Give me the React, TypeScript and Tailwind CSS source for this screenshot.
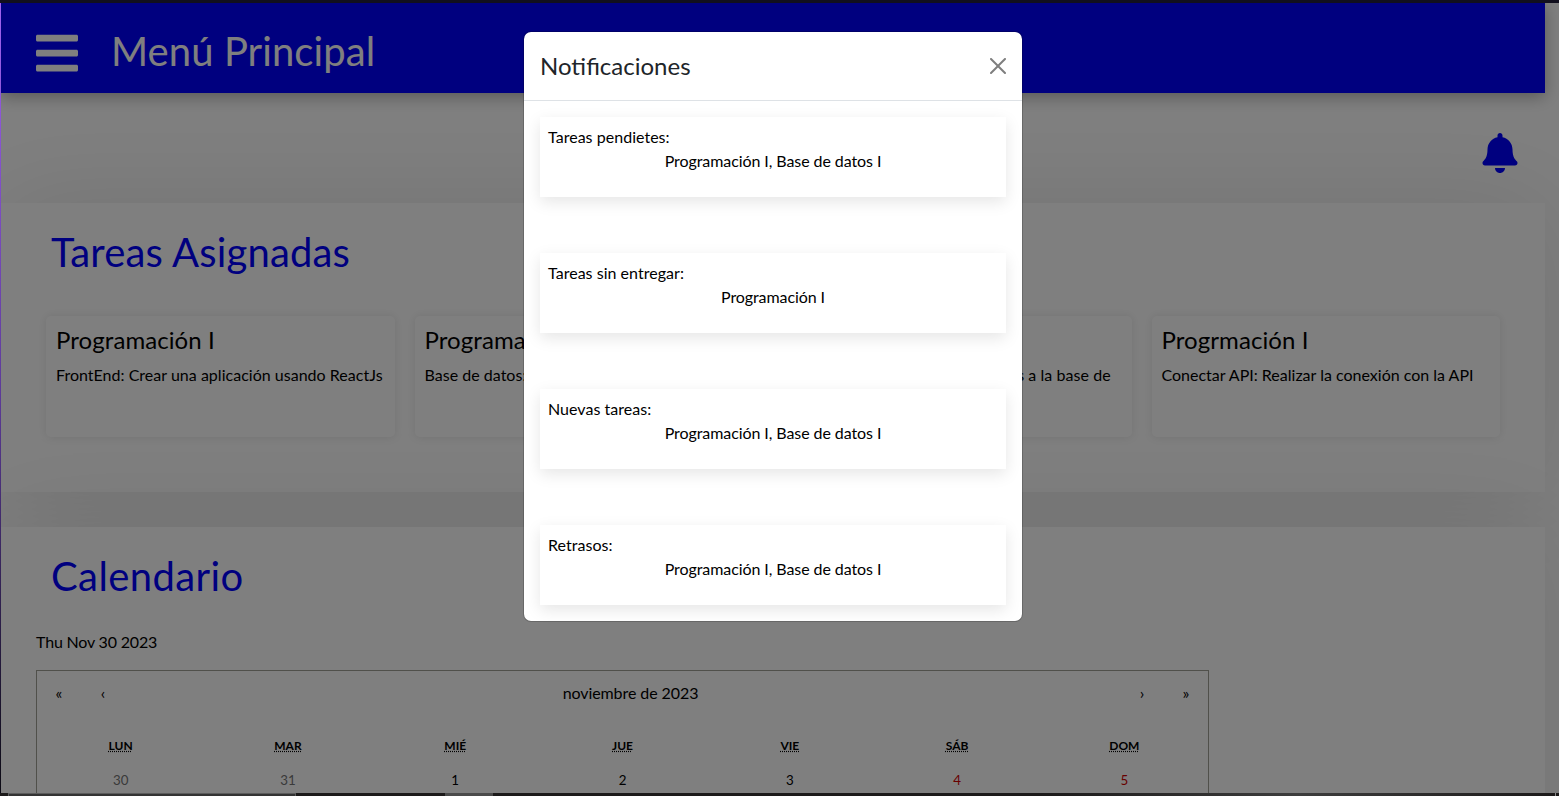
import { FaBars, FaBell } from "react-icons/fa";

const tasks = [
  { title: "Programación I", text: "FrontEnd: Crear una aplicación usando ReactJs", spacing: "tracking-[0.02px]" },
  { title: "Programación I", text: "Base de datos: Crear la base de datos", spacing: "tracking-[0.02px]" },
  { title: "Programación I", text: "Backend: Conexión de los cursos a la base de datos", spacing: "tracking-[0.06px]" },
  { title: "Progrmación I", text: "Conectar API: Realizar la conexión con la API", spacing: "tracking-normal" },
];

const notices = [
  { label: "Tareas pendietes:", value: "Programación I, Base de datos I" },
  { label: "Tareas sin entregar:", value: "Programación I" },
  { label: "Nuevas tareas:", value: "Programación I, Base de datos I" },
  { label: "Retrasos:", value: "Programación I, Base de datos I" },
];

const weekdays = ["LUN", "MAR", "MIÉ", "JUE", "VIE", "SÁB", "DOM"];

const days = [
  { n: 30, color: "text-[#757575]" },
  { n: 31, color: "text-[#757575]" },
  { n: 1, color: "text-black" },
  { n: 2, color: "text-black" },
  { n: 3, color: "text-black" },
  { n: 4, color: "text-[#d10000]" },
  { n: 5, color: "text-[#d10000]" },
];

function Header() {
  return (
    <header className="relative z-10 flex h-[90px] items-start bg-[#0000ff] pl-8 text-white shadow-[0_4px_15px_rgba(0,0,0,0.3)]">
      <FaBars className="mt-[26px] size-12 shrink-0" />
      <h1 className="ml-[30px] mt-6 text-[40px] leading-[48px] tracking-[0.08px]">Menú Principal</h1>
    </header>
  );
}

function Tasks() {
  return (
    <section className="h-[289px] bg-white px-[45px] pt-[25px] shadow-[0_0_100px_rgba(0,0,0,0.1)]">
      <h1 className="pl-[5px] text-[40px] leading-[48px] tracking-[0.16px] text-[#0000ff]">Tareas Asignadas</h1>
      <div className="mt-10 grid h-[121px] grid-cols-4 gap-5">
        {tasks.map((t, i) => (
          <article key={i} className="rounded-[5px] bg-white px-2.5 pt-2.5 shadow-[0_0_10px_rgba(0,0,0,0.1)]">
            <h4 className="text-2xl leading-[28.8px] tracking-[0.08px]">{t.title}</h4>
            <p className={"mt-2 text-base leading-6 " + t.spacing}>{t.text}</p>
          </article>
        ))}
      </div>
    </section>
  );
}

function Calendar() {
  return (
    <section className="mt-[35px] h-[600px] bg-white pt-[25px] pl-[35px] shadow-[0_0_100px_rgba(0,0,0,0.1)]">
      <h1 className="pl-[15px] text-[40px] leading-[48px] tracking-[0.4px] text-[#0000ff]">Calendario</h1>
      <p className="mt-[30px] leading-6 tracking-[-0.18px]">Thu Nov 30 2023</p>
      <div className="mt-4 h-[300px] w-[1173px] border border-[#a0a096]">
        <nav className="mb-4 flex h-11 items-center text-center text-base">
          <button className="w-11">«</button>
          <button className="w-11">‹</button>
          <span className="grow pl-4 tracking-[-0.08px]">noviembre de 2023</span>
          <button className="w-11">›</button>
          <button className="w-11">»</button>
        </nav>
        <div className="grid grid-cols-7 text-center text-xs font-bold">
          {weekdays.map((d) => (
            <div key={d} className="p-1.5 leading-[18px]">
              <abbr className="underline decoration-dotted">{d}</abbr>
            </div>
          ))}
        </div>
        <div className="grid grid-cols-7 text-center text-[13.33px] leading-4">
          {days.map((d) => (
            <div key={d.n} className={"py-[11px] " + d.color}>{d.n}</div>
          ))}
        </div>
      </div>
    </section>
  );
}

function Modal() {
  return (
    <div className="absolute top-[31px] left-[523px] z-30 w-[500px] rounded-lg border border-black/[0.175] bg-white bg-clip-padding">
      <div className="flex items-center justify-between border-b border-[#dee2e6] p-4">
        <h4 className="text-2xl leading-9 text-[#212529]">Notificaciones</h4>
        <svg viewBox="0 0 16 16" className="size-4 opacity-50" aria-label="Close">
          <path d="M.293.293a1 1 0 0 1 1.414 0L8 6.586 14.293.293a1 1 0 1 1 1.414 1.414L9.414 8l6.293 6.293a1 1 0 0 1-1.414 1.414L8 9.414l-6.293 6.293a1 1 0 0 1-1.414-1.414L6.586 8 .293 1.707a1 1 0 0 1 0-1.414z" />
        </svg>
      </div>
      <div className="flex flex-col gap-14 p-4">
        {notices.map((n) => (
          <div key={n.label} className="h-20 bg-white p-2 leading-6 shadow-[0_5px_15px_rgba(0,0,0,0.1)]">
            <p className="tracking-[0.03px]">{n.label}</p>
            <p className="text-center tracking-[-0.08px]">{n.value}</p>
          </div>
        ))}
      </div>
    </div>
  );
}

export default function App() {
  return (
    <div className="relative flex h-[796px] w-[1559px] flex-col overflow-hidden font-['Lato',sans-serif] text-base text-black">
      <div className="h-[3px] shrink-0 bg-[#110f1e]" />
      <div className="flex h-[790px] shrink-0">
        <div className="w-px shrink-0 bg-linear-to-b from-[#a062f0] via-[#5c3a98] to-[#0c0a14]" />
        <main className="relative grow overflow-hidden bg-white pr-3.5">
          <Header />
          <div className="flex h-[110px] justify-end pt-10 pr-[25px]">
            <FaBell className="size-10 text-[#0000ff]" />
          </div>
          <Tasks />
          <Calendar />
          <div className="absolute inset-0 z-20 bg-black/50" />
        </main>
      </div>
      <div className="flex h-[3px] shrink-0 bg-[#1c1a1a]">
        <div className="ml-2 w-72 border border-b-0 border-[#5c5c5c] bg-[#333]" />
        <div className="ml-[149px] w-12 bg-[#4b4b4b]" />
        <div className="ml-auto w-[515px] bg-linear-to-r from-[#1c1a1a] via-[#3d3d3d] to-[#1c1a1a]" />
        <div className="mr-[3px] w-px bg-[#8a8a8a]" />
      </div>
      <Modal />
    </div>
  );
}
